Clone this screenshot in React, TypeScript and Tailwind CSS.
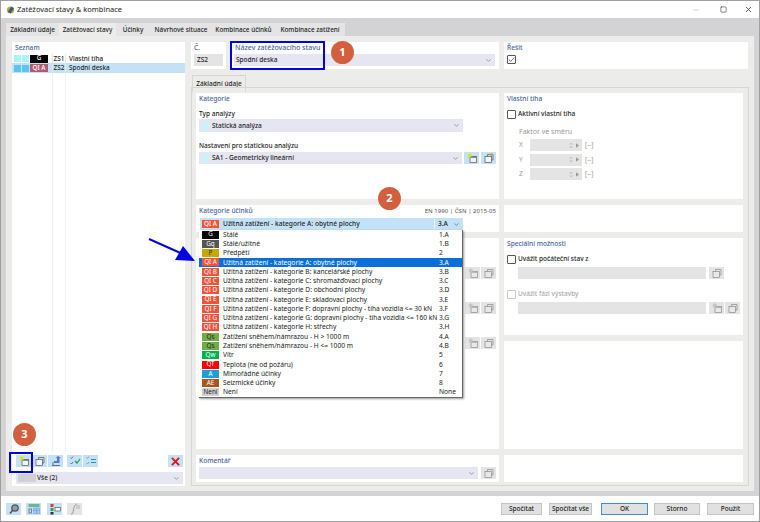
import React from 'react';
import { Minus, Square, X, ChevronDown } from 'lucide-react';

const labelCls = "text-[6.6px] leading-[9px] text-[#4a62a0] font-medium";

const NewIcon = ({ ghost }: { ghost?: boolean }) => (
  <svg viewBox="0 0 14 12" className="w-[14px] h-[12px]">
    <rect x="5" y="4.5" width="6.5" height="6" fill={ghost ? '#e8e8e8' : '#f4f4f4'} stroke={ghost ? '#8a8a8a' : '#555'} strokeWidth="0.7" />
    <rect x="5" y="4.5" width="6.5" height="1.2" fill={ghost ? '#a4a4a4' : '#5a6670'} />
    <path
      d="M4.5 .5l.8 1.7 1.7-.5-.7 1.700 1.200 1-1.800.2-.4 1.800-1-1.500-1.700.5.7-1.600-1.300-1 1.800-.3z"
      fill={ghost ? '#c4c4c4' : '#cfe820'}
    />
  </svg>
);

const CopyIcon = ({ ghost, accent }: { ghost?: boolean; accent?: boolean }) => (
  <svg viewBox="0 0 14 12" className="w-[14px] h-[12px]">
    <rect x="3" y="4.5" width="6.5" height="6" fill={ghost ? '#e8e8e8' : '#f4f4f4'} stroke={ghost ? '#8a8a8a' : '#555'} strokeWidth="0.7" />
    <path d="M5.5 4.5V2.5H11V8H9.5" fill="none" stroke={ghost ? '#8a8a8a' : '#555'} strokeWidth="0.7" />
    {accent && <circle cx="9.5" cy="2.5" r="1.5" fill="#d89a5c" />}
  </svg>
);

const IconBtn = ({ ghost, children }: { ghost?: boolean; children: React.ReactNode }) => (
  <div className={`w-[15px] h-[12px] flex items-center justify-center ${ghost ? 'bg-[#e4e4e4]' : 'bg-[#c4e2f7]'}`}>
    {children}
  </div>
);

const Combo = ({ text, swatch, className }: { text: string; swatch?: boolean; className?: string }) => (
  <div className={`h-[13px] bg-[#e6e5f2] flex items-center pl-[2px] pr-[3px] ${className || ''}`}>
    {swatch && <span className="w-[7px] h-[8px] bg-[#c6f6f8] ml-[1px] mr-[3px]" />}
    <span className="text-[6.5px] text-[#222] font-medium flex-1">{text}</span>
    <ChevronDown className="w-[7px] h-[7px] text-[#666]" />
  </div>
);

const Check = ({ checked, light }: { checked?: boolean; light?: boolean }) => (
  <span className={`w-[9px] h-[9px] rounded-[1px] border flex items-center justify-center ${light ? 'border-[#c8c8c8]' : 'border-[#555]'}`}>
    {checked && (
      <svg viewBox="0 0 9 9" className="w-[7px] h-[7px]">
        <path d="M1 4.5 3.5 7 8 2" fill="none" stroke="#444" strokeWidth="1" />
      </svg>
    )}
  </span>
);

const Badge = ({ label, color, text = 'text-white', w = 'w-[17px]' }: { label: string; color: string; text?: string; w?: string }) => (
  <span className={`${w} h-[8px] ${color} ${text} shrink-0 flex items-center justify-center text-[6.3px] leading-none`}>{label}</span>
);

const Tab = ({ label, active, width }: { label: string; active?: boolean; width: string }) => (
  <div className={`${width} flex items-center justify-center text-[6.4px] text-[#222] font-medium ${active ? 'bg-[#ecedea] h-[13px]' : 'h-[12px]'}`}>{label}</div>
);

const Factor = ({ axis }: { axis: string }) => (
  <div className="h-[12px] flex items-center mb-[2.6px]">
    <span className="w-[11px] text-[6.5px] text-[#999]">{axis}</span>
    <div className="w-[52px] h-[12px] bg-[#e4e4e4] flex items-center justify-end pr-[3px] gap-[3px] text-[#999]">
      <svg viewBox="0 0 5 8" className="w-[4px] h-[7px]"><path d="M1 3l1.5-2L4 3M1 5l1.5 2L4 5" fill="none" stroke="#999" strokeWidth="0.7" /></svg>
      <svg viewBox="0 0 4 6" className="w-[3px] h-[5px]"><path d="M0 0l4 3-4 3z" fill="#999" /></svg>
    </div>
    <span className="ml-[3px] text-[6.5px] text-[#999]">[--]</span>
  </div>
);

const rows: { b: string; c: string; t?: string; label: string; code: string; sel?: boolean }[] = [
  { b: 'G', c: 'bg-black', label: 'Stálé', code: '1.A' },
  { b: 'Gq', c: 'bg-[#555555]', label: 'Stálé/užitné', code: '1.B' },
  { b: 'P', c: 'bg-[#c8a800]', t: 'text-[#222]', label: 'Předpětí', code: '2' },
  { b: 'QI A', c: 'bg-[#f0533a]', label: 'Užitná zatížení - kategorie A: obytné plochy', code: '3.A', sel: true },
  { b: 'QI B', c: 'bg-[#f0533a]', label: 'Užitná zatížení - kategorie B: kancelářské plochy', code: '3.B' },
  { b: 'QI C', c: 'bg-[#f0533a]', label: 'Užitná zatížení - kategorie C: shromažďovací plochy', code: '3.C' },
  { b: 'QI D', c: 'bg-[#f0533a]', label: 'Užitná zatížení - kategorie D: obchodní plochy', code: '3.D' },
  { b: 'QI E', c: 'bg-[#f0533a]', label: 'Užitná zatížení - kategorie E: skladovací plochy', code: '3.E' },
  { b: 'QI F', c: 'bg-[#f0533a]', label: 'Užitná zatížení - kategorie F: dopravní plochy - tíha vozidla <= 30 kN', code: '3.F' },
  { b: 'QI G', c: 'bg-[#f0533a]', label: 'Užitná zatížení - kategorie G: dopravní plochy - tíha vozidla <= 160 kN', code: '3.G' },
  { b: 'QI H', c: 'bg-[#f0533a]', label: 'Užitná zatížení - kategorie H: střechy', code: '3.H' },
  { b: 'Qs', c: 'bg-[#70ad47]', t: 'text-[#222]', label: 'Zatížení sněhem/námrazou - H > 1000 m', code: '4.A' },
  { b: 'Qs', c: 'bg-[#70ad47]', t: 'text-[#222]', label: 'Zatížení sněhem/námrazou - H <= 1000 m', code: '4.B' },
  { b: 'Qw', c: 'bg-[#00b050]', label: 'Vítr', code: '5' },
  { b: 'QT', c: 'bg-[#ff0000]', label: 'Teplota (ne od požáru)', code: '6' },
  { b: 'A', c: 'bg-[#1f9fd8]', label: 'Mimořádné účinky', code: '7' },
  { b: 'AE', c: 'bg-[#a8561c]', label: 'Seizmické účinky', code: '8' },
  { b: 'Není', c: 'bg-[#d0d0d0]', t: 'text-[#222]', label: 'Není', code: 'None' },
];

const Step = ({ n, className }: { n: number; className: string }) => (
  <div className={`absolute w-[23px] h-[23px] rounded-full bg-[#d2603f] text-white text-[11px] font-bold flex items-center justify-center ${className}`}>{n}</div>
);

const FootBtn = ({ label, width, primary }: { label: string; width: string; primary?: boolean }) => (
  <div className={`${width} h-[12px] bg-[#e1e1e1] border flex items-center justify-center text-[6.5px] font-medium text-[#222] ${primary ? 'border-[#3d8ad8]' : 'border-[#c4c4c4]'}`}>{label}</div>
);

const App = () => {
  return (
    <div className="relative w-[760px] h-[522px] overflow-hidden bg-white border border-[#a0a0a0] flex flex-col font-['Noto_Sans',sans-serif]">
      {/* titulek */}
      <div className="h-[17px] flex items-center pl-[5px] pr-[6px] shrink-0">
        <svg viewBox="0 0 10 10" className="w-[9px] h-[10px] mr-[2px]">
          <circle cx="5" cy="5" r="4" fill="#c8a23c" />
          <path d="M2 7 6 1l3 2-4 6z" fill="#2f5f8f" />
        </svg>
        <span className="text-[7.5px] text-[#222] flex-1">Zatěžovací stavy &amp; kombinace</span>
        <Minus className="w-[8px] h-[8px] text-[#bbb] mr-[20px]" />
        <Square className="w-[7px] h-[7px] text-[#333] mr-[17px]" />
        <X className="w-[9px] h-[9px] text-[#333]" />
      </div>

      <div className="flex-1 bg-[#d3d3d6] flex flex-col pl-[5px] pr-[5px] pb-[5px]">
        {/* zalozky */}
        <div className="h-[18px] flex items-end shrink-0">
          <div className="flex items-end bg-[#e4e4e6]">
            <Tab label="Základní údaje" width="w-[53px]" />
            <Tab label="Zatěžovací stavy" width="w-[57px]" active />
            <Tab label="Účinky" width="w-[34px]" />
            <Tab label="Návrhové situace" width="w-[62px]" />
            <Tab label="Kombinace účinků" width="w-[63px]" />
            <Tab label="Kombinace zatížení" width="w-[70px]" />
          </div>
        </div>

        <div className="flex-1 bg-[#ecedea] flex gap-[6px] pt-[6px] pl-[6px] pr-[5px] pb-[5px]">
          {/* seznam */}
          <div className="w-[173px] bg-white flex flex-col">
            <div className={`${labelCls} h-[12px] pl-[3px] pt-[1px]`}>Seznam</div>
            <div className="h-[9px] flex items-center text-[6.4px] font-medium text-[#222]">
              <div className="w-[41px] h-full flex items-center gap-[1px] pl-[2px] border-r border-[#e8e8e8]">
                <span className="w-[7px] h-[7px] bg-[#a8f5f7]" />
                <span className="w-[7px] h-[7px] bg-[#a8f5f7]" />
                <Badge label="G" color="bg-black" w="w-[18px]" />
              </div>
              <div className="w-[13px] h-full flex items-center justify-center border-r border-[#e8e8e8]">ZS1</div>
              <span className="pl-[3px]">Vlastní tíha</span>
            </div>
            <div className="h-[10px] flex items-center text-[6.4px] font-medium text-[#222] bg-[#c4e2f7]">
              <div className="w-[41px] h-full flex items-center gap-[1px] pl-[2px] border-r border-[#e8e8e8]">
                <span className="w-[7px] h-[7px] bg-[#5cc4ef]" />
                <span className="w-[7px] h-[7px] bg-[#5cc4ef]" />
                <Badge label="QI A" color="bg-[#b05a70]" w="w-[18px]" />
              </div>
              <div className="w-[13px] h-full flex items-center justify-center border-r border-[#e8e8e8]">ZS2</div>
              <span className="pl-[3px]">Spodní deska</span>
            </div>
            <div className="flex-1 flex">
              <div className="w-[41px] border-r border-[#f0f0f0]" />
              <div className="w-[13px] border-r border-[#f0f0f0]" />
            </div>
            <div className="pl-[4px] pr-[2px] pt-[3px] pb-[2px]">
              <div className="flex items-center h-[12px]">
                <div className="flex gap-[1px]">
                  <IconBtn><NewIcon /></IconBtn>
                  <IconBtn><CopyIcon /></IconBtn>
                  <IconBtn>
                    <svg viewBox="0 0 14 12" className="w-[14px] h-[12px]">
                      <path d="M3 10.5h8M4 10.5V7" stroke="#555" strokeWidth="0.8" fill="none" />
                      <path d="M5 6h3V3H6.5L9 1l3 2h-1.5v5H5z" fill="#5a78c8" />
                    </svg>
                  </IconBtn>
                </div>
                <div className="flex gap-[1px] ml-[4px]">
                  <IconBtn>
                    <svg viewBox="0 0 14 12" className="w-[14px] h-[12px]">
                      <path d="M2.5 2.5l1 1 1.5-2M2.5 8l1 1 1.5-2" stroke="#555" strokeWidth="0.8" fill="none" />
                      <path d="M7 6l2 2 3-4" stroke="#12a050" strokeWidth="1.2" fill="none" />
                    </svg>
                  </IconBtn>
                  <IconBtn>
                    <svg viewBox="0 0 14 12" className="w-[14px] h-[12px]">
                      <path d="M2.5 2.5l1 1 1.5-2M2.5 8l1 1 1.5-2" stroke="#888" strokeWidth="0.8" fill="none" />
                      <path d="M7 4.5h5M12 7.5H7" stroke="#12a090" strokeWidth="1.2" fill="none" />
                    </svg>
                  </IconBtn>
                </div>
                <div className="ml-auto">
                  <IconBtn>
                    <svg viewBox="0 0 10 10" className="w-[9px] h-[9px]">
                      <path d="M1 1l8 8M9 1l-8 8" stroke="#e01818" strokeWidth="2.2" />
                    </svg>
                  </IconBtn>
                </div>
              </div>
              <div className="h-[12px] mt-[5px] bg-[#e6e5f2] flex items-center pl-[2px] pr-[3px]">
                <span className="w-[18px] h-[8px] bg-[#d0d0d0] mr-[1px]" />
                <span className="text-[6.5px] font-medium text-[#222] flex-1">Vše (2)</span>
                <ChevronDown className="w-[7px] h-[7px] text-[#666]" />
              </div>
            </div>
          </div>

          {/* prava cast */}
          <div className="flex-1 flex flex-col min-w-0">
            <div className="h-[27px] flex shrink-0">
              <div className="w-[35px] bg-white pl-[3px] pr-[3px]">
                <div className={`${labelCls} h-[12px] pt-[1px]`}>Č.</div>
                <div className="h-[12px] bg-[#e4e4e4] text-[6.5px] font-medium text-[#222] flex items-center pl-[3px]">ZS2</div>
              </div>
              <div className="w-[269px] ml-[4px] bg-white pl-[4px] pr-[4px]">
                <div className="text-[7px] leading-[9px] text-[#4a62a0] font-medium h-[12px] pt-[1px] pl-[1px]">Název zatěžovacího stavu</div>
                <Combo text="Spodní deska" className="!h-[12px]" />
              </div>
              <div className="flex-1 ml-[5px] mr-[1px] bg-white pl-[3px]">
                <div className={`${labelCls} h-[13px] pt-[1px]`}>Řešit</div>
                <Check checked />
              </div>
            </div>

            <div className="h-[17px] flex items-end mt-[6px] shrink-0">
              <div className="w-[54px] h-[17px] ml-[1px] bg-[#ecedea] border border-b-0 border-[#d6d6d6] flex items-start pt-[3px] justify-center text-[6.5px] text-[#222] font-medium">Základní údaje</div>
            </div>

            <div className="flex-1 border border-[#d6d6d6] -mt-[5px] pt-[5px] pl-[4px] pr-[5px] pb-[3px] grid grid-cols-[303px_239px] grid-rows-[106px_27px_97px_108px_27px] gap-x-[5px] gap-y-[6px]">
              {/* kategorie */}
              <div className="bg-white pl-[3px] pr-[3px]">
                <div className={`${labelCls} h-[14px] pt-[1px]`}>Kategorie</div>
                <div className="text-[6.5px] font-medium text-[#222] h-[12px] pt-[2px]">Typ analýzy</div>
                <Combo text="Statická analýza" swatch className="w-[264px]" />
                <div className="text-[6.5px] font-medium text-[#222] h-[20px] pt-[9px]">Nastavení pro statickou analýzu</div>
                <div className="flex items-center gap-[2px]">
                  <Combo text="SA1 - Geometricky lineární" swatch className="w-[264px] !h-[12px]" />
                  <IconBtn><NewIcon /></IconBtn>
                  <IconBtn><CopyIcon accent /></IconBtn>
                </div>
              </div>
              {/* vlastni tiha */}
              <div className="bg-white pl-[3px]">
                <div className={`${labelCls} h-[16px] pt-[1px]`}>Vlastní tíha</div>
                <div className="flex items-center gap-[2px] h-[10px]">
                  <Check />
                  <span className="text-[6.5px] text-[#222] font-medium">Aktivní vlastní tíha</span>
                </div>
                <div className="pl-[12px] pt-[8px]">
                  <div className="text-[7px] text-[#999] h-[12px]">Faktor ve směru</div>
                  <Factor axis="X" />
                  <Factor axis="Y" />
                  <Factor axis="Z" />
                </div>
              </div>
              {/* kategorie ucinku */}
              <div className="bg-white pl-[3px] pr-[3px]">
                <div className="flex justify-between h-[13px] pt-[1px]">
                  <span className={labelCls}>Kategorie účinků</span>
                  <span className="text-[6.1px] leading-[9px] text-[#555]">EN 1990 | ČSN | 2015-05</span>
                </div>
              </div>
              <div className="bg-white" />
              {/* radky pod rozbalovacim seznamem */}
              <div className="row-span-2 bg-white flex flex-col items-end pr-[3px] pt-[29px] gap-[23px]">
                {[0, 1, 2].map((i) => (
                  <div key={i} className="flex gap-[1px]">
                    <IconBtn ghost><NewIcon ghost /></IconBtn>
                    <IconBtn ghost><CopyIcon ghost /></IconBtn>
                  </div>
                ))}
              </div>
              {/* specialni moznosti */}
              <div className="bg-white pl-[3px]">
                <div className={`${labelCls} h-[16px] pt-[1px]`}>Speciální možnosti</div>
                <div className="flex items-center gap-[2px] h-[10px]">
                  <Check />
                  <span className="text-[6.5px] text-[#222] font-medium">Uvážit počáteční stav z</span>
                </div>
                <div className="flex items-center gap-[3px] pl-[11px] mt-[3px]">
                  <div className="w-[188px] h-[12px] bg-[#e4e4e4]" />
                  <IconBtn ghost><CopyIcon ghost /></IconBtn>
                </div>
                <div className="flex items-center gap-[2px] h-[10px] mt-[10px]">
                  <Check light />
                  <span className="text-[6.5px] text-[#aaa] font-medium">Uvážit fázi výstavby</span>
                </div>
                <div className="flex items-center pl-[11px] mt-[3px]">
                  <div className="w-[188px] h-[12px] bg-[#e4e4e4] mr-[3px]" />
                  <IconBtn ghost><NewIcon ghost /></IconBtn>
                  <div className="ml-[1px]"><IconBtn ghost><CopyIcon ghost /></IconBtn></div>
                </div>
              </div>
              <div className="bg-white" />
              {/* komentar */}
              <div className="bg-white pl-[3px] pr-[3px]">
                <div className={`${labelCls} h-[12px] pt-[1px]`}>Komentář</div>
                <div className="flex items-center gap-[3px]">
                  <Combo text="" className="w-[279px] !h-[12px]" />
                  <IconBtn ghost><CopyIcon ghost /></IconBtn>
                </div>
              </div>
              <div className="bg-white" />
            </div>
          </div>
        </div>
      </div>

      {/* spodni lista */}
      <div className="h-[25px] shrink-0 flex items-center pl-[5px] pr-[5px]">
        <div className="flex gap-[5px]">
          <IconBtn>
            <svg viewBox="0 0 14 12" className="w-[14px] h-[12px]">
              <circle cx="8" cy="5" r="3.2" fill="#8aa0b0" stroke="#555" strokeWidth="1.3" />
              <path d="M5.5 7.5 3 10.5" stroke="#555" strokeWidth="1.6" />
            </svg>
          </IconBtn>
          <IconBtn>
            <svg viewBox="0 0 14 12" className="w-[14px] h-[12px]">
              <rect x="1.5" y="1" width="11" height="3" fill="#6ab88a" />
              <path d="M6.5 5h6v5.5h-6zM6.5 7.5h6M9.5 5v5.500" fill="#a8c4f0" stroke="#6f8fd0" strokeWidth="0.5" />
              <rect x="2" y="6" width="2.5" height="4" fill="none" stroke="#555" strokeWidth="0.7" />
            </svg>
          </IconBtn>
          <div className="ml-[1px]">
            <IconBtn>
              <svg viewBox="0 0 14 12" className="w-[14px] h-[12px]">
                <rect x="2.5" y="1" width="3" height="3" fill="#d04030" />
                <rect x="2.5" y="5" width="3" height="3" fill="#3a9a50" />
                <rect x="2.5" y="9" width="3" height="2.5" fill="#333" />
                <rect x="7" y="4.5" width="5.5" height="3.5" fill="#fff" stroke="#555" strokeWidth="0.7" />
              </svg>
            </IconBtn>
          </div>
          <IconBtn ghost>
            <svg viewBox="0 0 14 12" className="w-[14px] h-[12px]">
              <path d="M3 11c2 0 2-1 2.5-4S7 1 9 1" fill="none" stroke="#999" strokeWidth="1" />
              <path d="M8 5h4M8 3h4" stroke="#aaa" strokeWidth="0.8" />
            </svg>
          </IconBtn>
        </div>
        <div className="ml-auto flex items-center">
          <FootBtn label="Spočítat" width="w-[41px]" />
          <div className="ml-[7px]"><FootBtn label="Spočítat vše" width="w-[43px]" /></div>
          <div className="ml-[9px]"><FootBtn label="OK" width="w-[47px]" primary /></div>
          <div className="ml-[6px]"><FootBtn label="Storno" width="w-[46px]" /></div>
          <div className="ml-[7px]"><FootBtn label="Použít" width="w-[47px]" /></div>
        </div>
      </div>

      {/* rozbalovaci seznam kategorie ucinku */}
      <div className="absolute left-[199px] top-[217px] w-[263px] h-[12px] bg-[#c4e2f7] flex items-center pl-[2px] text-[6.65px] font-medium text-[#222]">
        <Badge label="QI A" color="bg-[#f0533a]" />
        <span className="ml-[4px] w-[211px]">Užitná zatížení - kategorie A: obytné plochy</span>
        <span className="border-l border-[#eaf4fb] pl-[3px] w-[18px]">3.A</span>
        <ChevronDown className="w-[7px] h-[7px] text-[#555] ml-[1px]" />
      </div>
      <div className="absolute left-[198px] top-[229px] w-[264px] bg-white border-r border-b border-[#666] shadow-[1px_1px_2px_rgba(0,0,0,0.4)]">
        {rows.map((r, i) => (
          <div key={i} className={`h-[9.29px] flex items-center pl-[3px] text-[6.65px] ${r.sel ? 'bg-[#0a6fd8] text-white' : 'text-[#222]'}`}>
            <Badge label={r.b} color={r.c} text={r.t || 'text-white'} />
            <span className="ml-[4px] w-[214px] whitespace-nowrap">{r.label}</span>
            <span className="ml-[2px]">{r.code}</span>
          </div>
        ))}
      </div>

      {/* anotace */}
      <div className="absolute left-[229px] top-[40px] w-[95px] h-[29px] border-2 border-[#0000e0]" />
      <div className="absolute left-[8px] top-[451px] w-[24px] h-[21px] border-2 border-[#0000e0]" />
      <Step n={1} className="left-[330px] top-[40px]" />
      <Step n={2} className="left-[377px] top-[186px]" />
      <Step n={3} className="left-[12px] top-[422px]" />
      <svg className="absolute left-[146px] top-[236px] w-[52px] h-[28px]" viewBox="0 0 52 28">
        <path d="M2 2 38 18" stroke="#0000e0" strokeWidth="2" />
        <path d="M48 24 28 23 36 9z" fill="#0000e0" />
      </svg>
    </div>
  );
};

export default App;
